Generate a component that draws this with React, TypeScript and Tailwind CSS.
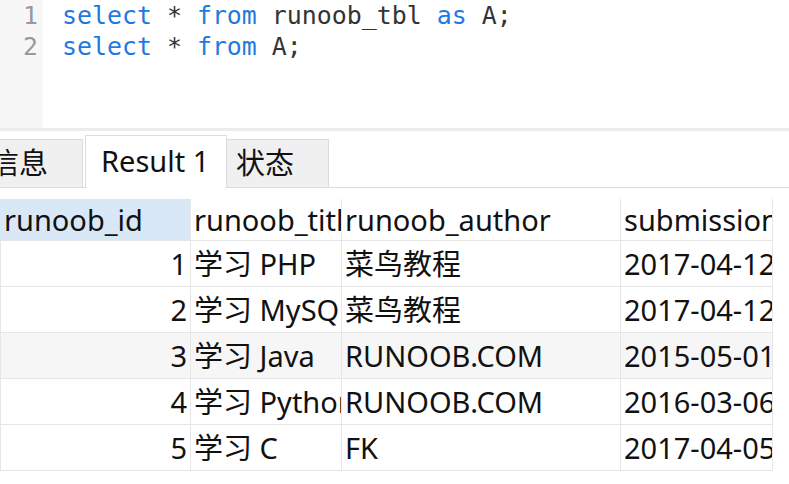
import React from 'react';

const rows = [
  { id: 1, title: '学习 PHP', author: '菜鸟教程', date: '2017-04-12' },
  { id: 2, title: '学习 MySQL', author: '菜鸟教程', date: '2017-04-12' },
  { id: 3, title: '学习 Java', author: 'RUNOOB.COM', date: '2015-05-01' },
  { id: 4, title: '学习 Python', author: 'RUNOOB.COM', date: '2016-03-06' },
  { id: 5, title: '学习 C', author: 'FK', date: '2017-04-05' },
];

const mono = { fontFamily: '"DejaVu Sans Mono", "Liberation Mono", monospace' };
const ui = { fontFamily: '"Noto Sans", "Noto Sans CJK SC", sans-serif' };

const Kw = ({ children }: { children: React.ReactNode }) => (
  <span className="text-[#1f7ae0]">{children}</span>
);

const App = () => {
  return (
    <div className="w-[789px] h-[484px] bg-white overflow-hidden">
      {/* editor */}
      <div className="flex h-[128px]" style={mono}>
        <div className="w-[43px] bg-[#f7f7f7] text-[#9a9a9a] text-[24.8px] leading-[31px] text-right pr-[5px]">
          <div>1</div>
          <div>2</div>
        </div>
        <div className="pl-[19px] text-[24.9px] leading-[31px] text-[#333] whitespace-pre">
          <div><Kw>select</Kw> * <Kw>from</Kw> runoob_tbl <Kw>as</Kw> A;</div>
          <div><Kw>select</Kw> * <Kw>from</Kw> A;</div>
        </div>
      </div>
      <div className="h-[3px] bg-[#ececec]" />

      {/* tabs */}
      <div className="h-[57px] flex items-end border-b border-[#dcdcdc] text-[29px] text-[#111]" style={ui}>
        <div className="w-[102px] -ml-[19px] h-[48px] bg-[#f0f0f0] border border-b-0 border-[#dcdcdc] pl-[8px] leading-[46px] overflow-hidden whitespace-nowrap">信息</div>
        <div className="w-[142px] ml-[2px] h-[53px] bg-white border border-b-0 border-[#dcdcdc] pl-[15px] leading-[50px] -mb-[1px]">Result 1</div>
        <div className="w-[102px] h-[48px] bg-[#f0f0f0] border border-b-0 border-l-0 border-[#dcdcdc] pl-[9px] leading-[46px] whitespace-nowrap">状态</div>
      </div>

      {/* result grid */}
      <div className="mt-[11px] w-[773px] grid grid-cols-[191px_151px_279px_152px] text-[29px] text-[#111]" style={ui}>
        <div className="h-[42px] bg-[#d9e8f7] border-b border-r border-[#e6e6e6] pl-[4px] leading-[42px] overflow-hidden whitespace-nowrap">runoob_id</div>
        <div className="h-[42px] border-b border-r border-[#e6e6e6] pl-[3px] leading-[42px] overflow-hidden whitespace-nowrap">runoob_title</div>
        <div className="h-[42px] border-b border-r border-[#e6e6e6] pl-[3px] leading-[42px] overflow-hidden whitespace-nowrap">runoob_author</div>
        <div className="h-[42px] border-b border-r border-[#e6e6e6] pl-[3px] leading-[42px] overflow-hidden whitespace-nowrap">submission_date</div>
        {rows.map((r) => {
          const bg = r.id === 3 ? 'bg-[#f6f6f6]' : 'bg-white';
          return (
            <React.Fragment key={r.id}>
              <div className={`h-[46px] ${bg} border-l border-b border-r border-[#e6e6e6] pr-[3px] text-right leading-[45px] overflow-hidden whitespace-nowrap`}>{r.id}</div>
              <div className={`h-[46px] ${bg} border-b border-r border-[#e6e6e6] pl-[3px] leading-[45px] overflow-hidden whitespace-nowrap`}>{r.title}</div>
              <div className={`h-[46px] ${bg} border-b border-r border-[#e6e6e6] pl-[3px] leading-[45px] overflow-hidden whitespace-nowrap`}>{r.author}</div>
              <div className={`h-[46px] ${bg} border-b border-r border-[#e6e6e6] pl-[3px] leading-[45px] overflow-hidden whitespace-nowrap`}>{r.date}</div>
            </React.Fragment>
          );
        })}
      </div>
    </div>
  );
};

export default App;
